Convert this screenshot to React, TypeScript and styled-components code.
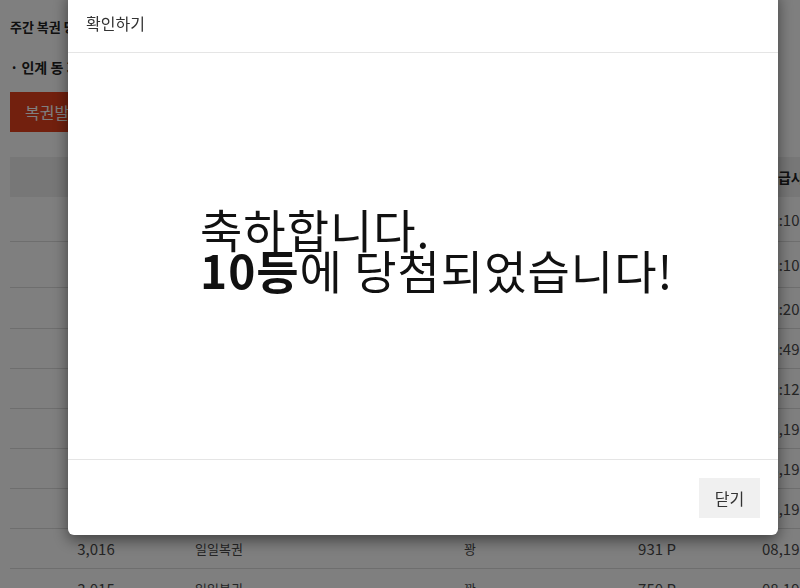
import { styled, createGlobalStyle } from "styled-components";

const GlobalStyle = createGlobalStyle`
  html, body {
    margin: 0;
    padding: 0;
    background: #fff;
    font-family: "Noto Sans CJK KR", "Noto Sans", sans-serif;
    color: #333;
    overflow: hidden;
  }
`;

const Page = styled.div`
  width: 800px;
  height: 588px;
  padding: 17px 0 0 10px;
  box-sizing: border-box;
  overflow: hidden;
`;

const PageTitle = styled.h1`
  margin: 0;
  font-size: 13px;
  line-height: 20px;
  font-weight: 700;
  color: #222;
`;

const SubTitle = styled.h2`
  margin: 20px 0 0;
  font-size: 14px;
  line-height: 20px;
  font-weight: 700;
  color: #222;
`;

const IssueButton = styled.button`
  margin-top: 15px;
  height: 40px;
  padding: 0 15px;
  border: 0;
  background: #e4401c;
  color: #fff;
  font-family: inherit;
  font-size: 16px;
`;

const Table = styled.div`
  margin-top: 25px;
  width: 900px;
`;

const Row = styled.div<{ $h?: number; $head?: boolean }>`
  display: grid;
  grid-template-columns: 172px 198px 180px 194px 156px;
  align-items: center;
  height: ${(p) => p.$h ?? 40}px;
  box-sizing: border-box;
  background: ${(p) => (p.$head ? "#eeeeee" : "transparent")};
  border-bottom: ${(p) => (p.$head ? "0" : "1px solid #dcdcdc")};
  font-size: ${(p) => (p.$head ? "14px" : "15px")};
  font-weight: ${(p) => (p.$head ? 700 : 400)};
  color: ${(p) => (p.$head ? "#222" : "#4a4a4a")};
`;

const Cell = styled.div<{ $align?: "left" | "center" }>`
  text-align: ${(p) => p.$align ?? "center"};
  padding-left: ${(p) => (p.$align === "left" ? "13px" : "0")};
  white-space: nowrap;
`;

const NameCell = styled(Cell)`
  font-size: 13px;
`;

const TimeCell = styled.div<{ $head?: boolean }>`
  padding-left: ${(p) => (p.$head ? "11px" : "8px")};
  white-space: nowrap;
`;

const Overlay = styled.div`
  position: fixed;
  inset: 0;
  background: rgba(0, 0, 0, 0.5);
  display: flex;
  align-items: flex-start;
  padding-left: 68px;
`;

const Modal = styled.div`
  margin-top: -10px;
  width: 710px;
  height: 545px;
  background: #fff;
  border-radius: 6px;
  box-shadow: 0 5px 15px rgba(0, 0, 0, 0.5);
  display: flex;
  flex-direction: column;
`;

const ModalHeader = styled.div`
  height: 63px;
  box-sizing: border-box;
  padding: 3px 18px 0;
  display: flex;
  align-items: center;
  border-bottom: 1px solid #e5e5e5;
`;

const ModalTitle = styled.h3`
  margin: 0;
  font-size: 16px;
  font-weight: 400;
  color: #333;
`;

const ModalBody = styled.div`
  flex: 1;
  display: flex;
  flex-direction: column;
  justify-content: center;
  padding: 0 0 14px 132px;
  font-size: 46px;
  line-height: 41px;
  letter-spacing: 1px;
  color: #111;
`;

const Strong = styled.b`
  font-weight: 700;
`;

const ModalFooter = styled.div`
  height: 76px;
  box-sizing: border-box;
  border-top: 1px solid #e5e5e5;
  display: flex;
  align-items: center;
  justify-content: flex-end;
  padding-right: 18px;
`;

const CloseButton = styled.button`
  width: 61px;
  height: 40px;
  border: 0;
  background: #f0f0f0;
  color: #333;
  font-family: inherit;
  font-size: 16px;
`;

type Ticket = { no: string; kind: string; result: string; point: string; time: string; h?: number };

const tickets: Ticket[] = [
  { no: "3,024", kind: "일일복권", result: "꽝", point: "812 P", time: "22:10:11", h: 45 },
  { no: "3,023", kind: "일일복권", result: "꽝", point: "640 P", time: "22:10:03", h: 46 },
  { no: "3,022", kind: "일일복권", result: "꽝", point: "905 P", time: "13:20:45", h: 41 },
  { no: "3,021", kind: "일일복권", result: "꽝", point: "1,020 P", time: "10:49:17" },
  { no: "3,020", kind: "일일복권", result: "꽝", point: "533 P", time: "09:12:38" },
  { no: "3,019", kind: "일일복권", result: "꽝", point: "721 P", time: "08,19 23:40" },
  { no: "3,018", kind: "일일복권", result: "꽝", point: "688 P", time: "08,19 21:02" },
  { no: "3,017", kind: "일일복권", result: "꽝", point: "874 P", time: "08,19 18:55" },
  { no: "3,016", kind: "일일복권", result: "꽝", point: "931 P", time: "08,19 15:31" },
  { no: "3,015", kind: "일일복권", result: "꽝", point: "750 P", time: "08,19 11:07" },
];

export default function App() {
  return (
    <>
      <GlobalStyle />
      <Page>
        <PageTitle>주간 복권 당첨 내역</PageTitle>
        <SubTitle>· 인계 동 지점 복권 발급 현황</SubTitle>
        <IssueButton>복권발급하기</IssueButton>
        <Table>
          <Row $head>
            <Cell>번호</Cell>
            <Cell $align="left">복권종류</Cell>
            <Cell>당첨결과</Cell>
            <Cell>포인트</Cell>
            <TimeCell $head>발급시간</TimeCell>
          </Row>
          {tickets.map((t) => (
            <Row key={t.no} $h={t.h}>
              <Cell>{t.no}</Cell>
              <NameCell $align="left">{t.kind}</NameCell>
              <NameCell>{t.result}</NameCell>
              <Cell>{t.point}</Cell>
              <TimeCell>{t.time}</TimeCell>
            </Row>
          ))}
        </Table>
      </Page>
      <Overlay>
        <Modal>
          <ModalHeader>
            <ModalTitle>확인하기</ModalTitle>
          </ModalHeader>
          <ModalBody>
            <span>축하합니다.</span>
            <span>
              <Strong>10등</Strong>에 당첨되었습니다!
            </span>
          </ModalBody>
          <ModalFooter>
            <CloseButton>닫기</CloseButton>
          </ModalFooter>
        </Modal>
      </Overlay>
    </>
  );
}
